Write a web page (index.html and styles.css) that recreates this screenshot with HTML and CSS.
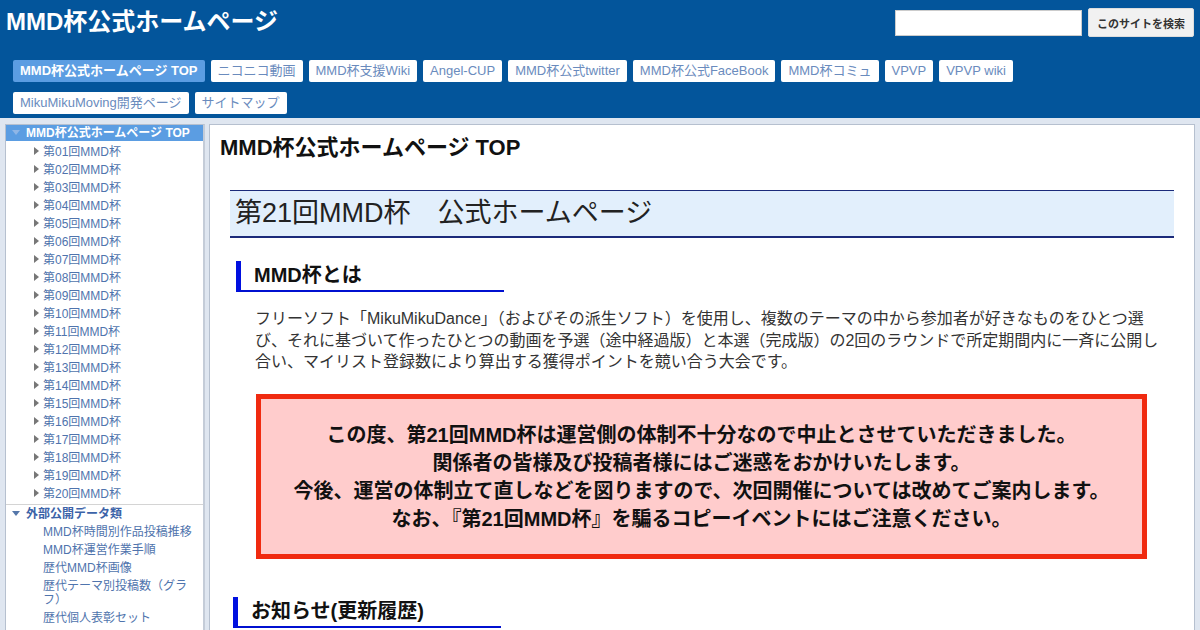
FILE: index.html
```html
<!DOCTYPE html>
<html lang="ja">
<head>
    <meta charset="UTF-8">
    <title>MMD杯公式ホームページ</title>
    <link rel="stylesheet" href="styles.css">
</head>
<body>
    <div class="header">
        <div class="header-top">
            <div class="site-title">MMD杯公式ホームページ</div>
            <form class="search">
                <input type="text" class="search-input">
                <button type="button" class="search-btn">このサイトを検索</button>
            </form>
        </div>
        <div class="nav">
            <a class="nav-item active">MMD杯公式ホームページ TOP</a>
            <a class="nav-item">ニコニコ動画</a>
            <a class="nav-item">MMD杯支援Wiki</a>
            <a class="nav-item">Angel-CUP</a>
            <a class="nav-item">MMD杯公式twitter</a>
            <a class="nav-item">MMD杯公式FaceBook</a>
            <a class="nav-item">MMD杯コミュ</a>
            <a class="nav-item">VPVP</a>
            <a class="nav-item">VPVP wiki</a>
            <a class="nav-item">MikuMikuMoving開発ページ</a>
            <a class="nav-item">サイトマップ</a>
        </div>
    </div>

    <div class="content">
        <div class="sidebar">
            <div class="side-top"><span class="tri-down light"></span>MMD杯公式ホームページ TOP</div>
            <ul class="side-list" id="rounds"></ul>
            <div class="side-group"><span class="tri-down"></span>外部公開データ類</div>
            <ul class="side-list plain">
                <li>MMD杯時間別作品投稿推移</li>
                <li>MMD杯運営作業手順</li>
                <li>歴代MMD杯画像</li>
                <li>歴代テーマ別投稿数（グラフ）</li>
                <li>歴代個人表彰セット</li>
            </ul>
        </div>

        <div class="main">
            <h1 class="page-title">MMD杯公式ホームページ TOP</h1>
            <div class="section">
                <h2 class="big-title">第21回MMD杯　公式ホームページ</h2>

                <h3 class="sub-title">MMD杯とは</h3>
                <p class="intro">フリーソフト「MikuMikuDance」（およびその派生ソフト）を使用し、複数のテーマの中から参加者が好きなものをひとつ選び、それに基づいて作ったひとつの動画を予選（途中経過版）と本選（完成版）の2回のラウンドで所定期間内に一斉に公開し合い、マイリスト登録数により算出する獲得ポイントを競い合う大会です。</p>

                <div class="notice">
                    この度、第21回MMD杯は運営側の体制不十分なので中止とさせていただきました。<br>
                    関係者の皆様及び投稿者様にはご迷惑をおかけいたします。<br>
                    今後、運営の体制立て直しなどを図りますので、次回開催については改めてご案内します。<br>
                    なお、『第21回MMD杯』を騙るコピーイベントにはご注意ください。
                </div>

                <h3 class="sub-title">お知らせ(更新履歴)</h3>
            </div>
        </div>
    </div>

    <script>
        // sidebar: 第01回〜第20回
        const list = document.getElementById("rounds");
        for (let i = 1; i <= 20; i++) {
            const li = document.createElement("li");
            li.innerHTML = '<span class="tri-right"></span>第' + String(i).padStart(2, "0") + '回MMD杯';
            list.appendChild(li);
        }
    </script>
</body>
</html>
```

FILE: styles.css
```css
body {
    margin: 0;
    font-family: "Liberation Sans", "Noto Sans CJK JP", sans-serif;
    background-color: #dfe6f0;
    color: #333;
}
.header {
    background-color: #03559b;
    height: 118px;
    padding: 0 6px 0 6px;
    box-sizing: border-box;
}
.header-top {
    display: flex;
    justify-content: space-between;
    align-items: flex-start;
    height: 60px;
}
.site-title {
    color: #fff;
    font-size: 24px;
    font-weight: bold;
    line-height: 28px;
    margin-top: 8px;
}
.search {
    display: flex;
    align-items: center;
    gap: 6px;
    margin-top: 8px;
}
.search-input {
    width: 187px;
    height: 26px;
    box-sizing: border-box;
    border: 1px solid #ccc;
    background: #fff;
    padding: 0 4px;
}
.search-btn {
    width: 106px;
    height: 29px;
    background: #f1f1f1;
    border: 1px solid #ddd;
    border-radius: 2px;
    font-family: inherit;
    font-size: 11px;
    font-weight: bold;
    color: #333;
    padding: 0;
}
.nav {
    display: flex;
    flex-wrap: wrap;
    gap: 10px 6px;
    padding-left: 7px;
    padding-right: 170px;
}
.nav-item {
    display: block;
    height: 22px;
    line-height: 22px;
    padding: 0 7px;
    background: #fff;
    border-radius: 2px;
    color: #6a8bbd;
    font-size: 13px;
    white-space: nowrap;
}
.nav-item.active {
    background: #5b9de2;
    color: #fff;
    font-weight: bold;
}
.content {
    display: flex;
    align-items: flex-start;
    gap: 4px;
    padding: 6px 5px 0 5px;
}
.sidebar {
    width: 200px;
    flex-shrink: 0;
    background: #fff;
    border: 1px solid #b6c0cf;
    border-right: 2px solid #c4ccd8;
    box-sizing: border-box;
    padding-bottom: 20px;
}
.side-top {
    height: 16px;
    line-height: 16px;
    background: #5b9de2;
    color: #fff;
    font-size: 12px;
    font-weight: bold;
    padding-left: 6px;
    margin-bottom: 2px;
    white-space: nowrap;
}
.tri-down {
    display: inline-block;
    width: 0;
    height: 0;
    border-left: 4px solid transparent;
    border-right: 4px solid transparent;
    border-top: 5px solid #5577aa;
    margin-right: 6px;
    vertical-align: 2px;
}
.tri-down.light {
    border-top-color: #8fb6e6;
}
.tri-right {
    display: inline-block;
    width: 0;
    height: 0;
    border-top: 4px solid transparent;
    border-bottom: 4px solid transparent;
    border-left: 5px solid #777;
    margin-right: 4px;
    vertical-align: 1px;
}
.side-list {
    list-style: none;
    margin: 0;
    padding: 0 8px 0 28px;
    font-size: 12px;
    color: #4f74ad;
}
.side-list li {
    line-height: 18px;
}
#rounds {
    border-bottom: 1px solid #d4d4d4;
    padding-bottom: 1px;
}
.side-list.plain {
    padding-left: 37px;
}
.side-list.plain li {
    line-height: 14px;
    padding: 2px 0;
}
.side-group {
    font-size: 12px;
    font-weight: bold;
    color: #3c63a8;
    line-height: 18px;
    padding-left: 6px;
}
.main {
    flex: 1;
    background: #fff;
    border: 1px solid #b6c0cf;
    height: 520px;
    overflow: hidden;
}
.page-title {
    margin: 0;
    padding: 11px 10px 0 10px;
    font-size: 22px;
    line-height: 24px;
    color: #111;
}
.section {
    padding: 0 20px;
}
.big-title {
    margin: 30px 0 0 0;
    padding: 4px 5px;
    font-size: 27px;
    line-height: 37px;
    font-weight: normal;
    color: #222;
    background: #e2effc;
    border-top: 1px solid #1b2a7a;
    border-bottom: 2px solid #1b2a7a;
}
.sub-title {
    width: 250px;
    margin: 23px 0 0 6px;
    padding-left: 13px;
    font-size: 20px;
    line-height: 29px;
    color: #111;
    border-left: 5px solid #0010e0;
    border-bottom: 2px solid #0010d0;
}
.intro {
    margin: 16px 8px 0 25px;
    font-size: 16px;
    line-height: 21.5px;
    color: #333;
}
.notice {
    margin: 21px 27px 0 26px;
    padding: 22px 0 21px 0;
    background: #ffcccc;
    border: 5px solid #f02a10;
    text-align: center;
    font-size: 20px;
    font-weight: bold;
    line-height: 28px;
    color: #111;
}
.notice + .sub-title {
    margin-top: 38px;
    margin-left: 3px;
}
```
